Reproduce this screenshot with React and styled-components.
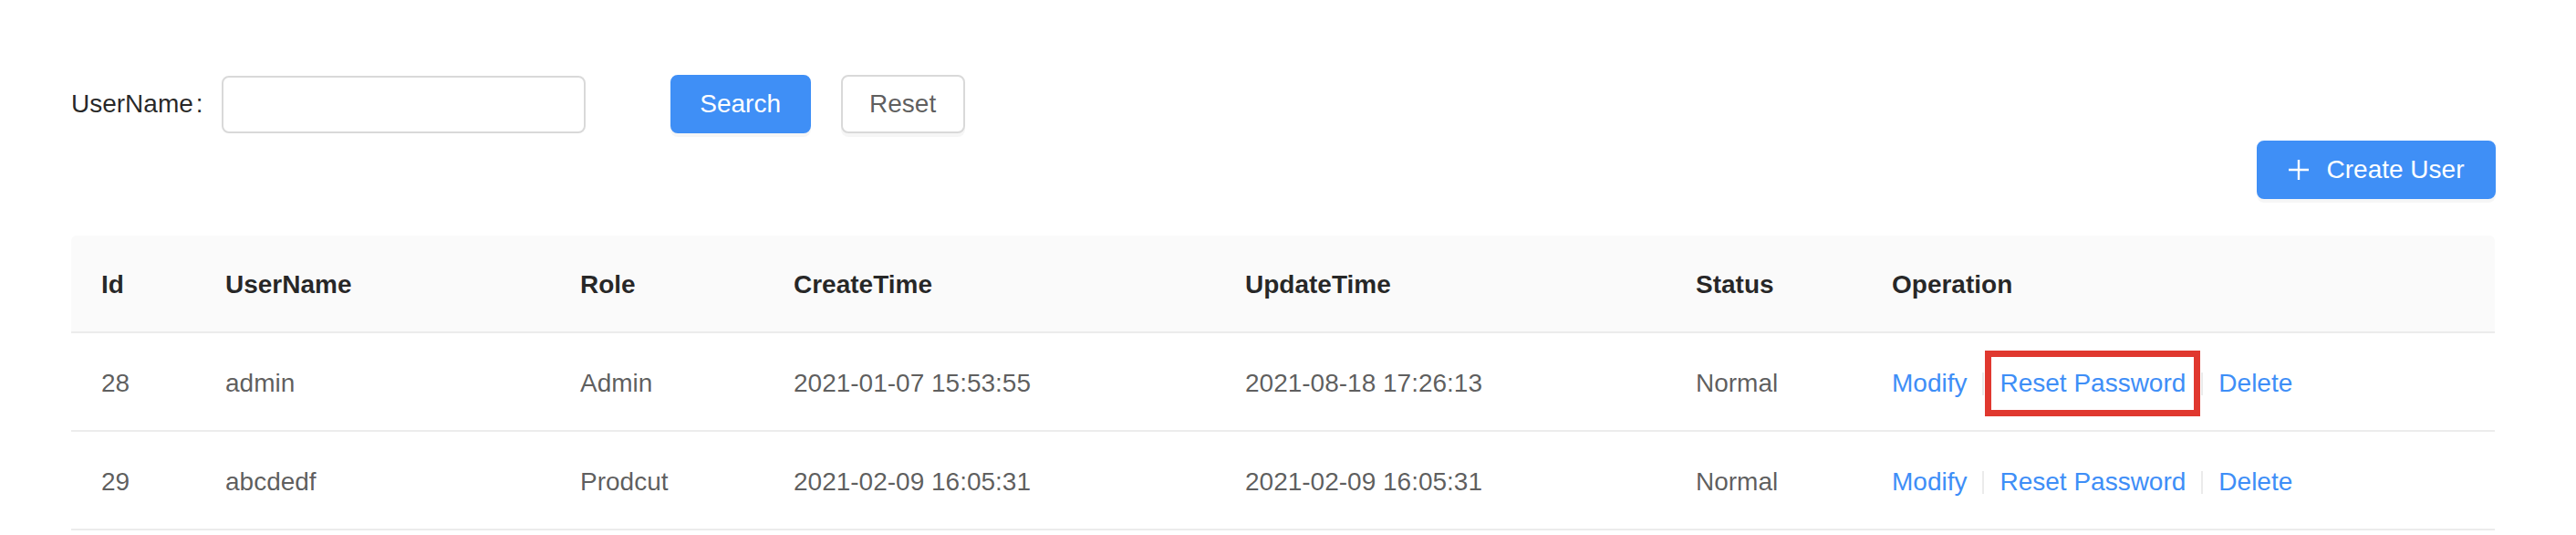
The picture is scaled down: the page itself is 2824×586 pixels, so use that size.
import React from "react"
import styled, { createGlobalStyle } from "styled-components"

const GlobalStyle = createGlobalStyle`
  html, body {
    margin: 0;
    padding: 0;
    background: #ffffff;
  }
  body {
    font-family: "Liberation Sans", Arial, sans-serif;
    font-size: 28px;
    color: rgba(0, 0, 0, 0.85);
  }
`

const Page = styled.div`
  padding: 82px 88px 0 78px;
  display: flex;
  flex-direction: column;
`

const SearchForm = styled.form`
  display: flex;
  align-items: center;
  height: 64px;
`

const Label = styled.label`
  display: flex;
  align-items: center;
  color: rgba(0, 0, 0, 0.85);
  line-height: 1;
  &::after {
    content: ":";
    margin: 0 20px 0 3px;
  }
`

const TextInput = styled.input`
  box-sizing: border-box;
  width: 399px;
  height: 63px;
  border: 2px solid #d9d9d9;
  border-radius: 8px;
  background: #fff;
  outline: none;
  font: inherit;
  padding: 0 20px;
`

const Button = styled.button`
  box-sizing: border-box;
  display: inline-flex;
  align-items: center;
  justify-content: center;
  gap: 20px;
  height: 64px;
  width: ${(props) => props.width}px;
  margin-left: ${(props) => props.offset || 0}px;
  padding: 0;
  border-radius: 8px;
  font-family: inherit;
  font-size: 28px;
  cursor: pointer;
  border: 2px solid ${(props) => (props.primary ? "#3f8ff6" : "#d9d9d9")};
  background: ${(props) => (props.primary ? "#3f8ff6" : "#ffffff")};
  color: ${(props) => (props.primary ? "#ffffff" : "rgba(0, 0, 0, 0.65)")};
  box-shadow: 0 4px 0 rgba(0, 0, 0, 0.035);
`

const Toolbar = styled.div`
  display: flex;
  justify-content: flex-end;
  margin-top: 8px;
`

const Table = styled.table`
  margin-top: 40px;
  width: 2657px;
  border-collapse: separate;
  border-spacing: 0;
  table-layout: fixed;
`

const HeadCell = styled.th`
  height: 107px;
  padding: 3px 0 0 33px;
  box-sizing: border-box;
  text-align: left;
  font-weight: 700;
  color: rgba(0, 0, 0, 0.85);
  background: #fafafa;
  border-bottom: 2px solid #ececec;
  &:first-child {
    border-top-left-radius: 6px;
  }
  &:last-child {
    border-top-right-radius: 6px;
  }
`

const Cell = styled.td`
  height: 108px;
  padding: 4px 0 0 33px;
  box-sizing: border-box;
  color: rgba(0, 0, 0, 0.65);
  border-bottom: 2px solid #ececec;
  vertical-align: middle;
  white-space: nowrap;
`

const Actions = styled.div`
  display: flex;
  align-items: center;
`

const Link = styled.a`
  display: inline-block;
  line-height: 40px;
  color: #3e8ef7;
  text-decoration: none;
  cursor: pointer;
  outline: ${(props) => (props.highlight ? "7px solid #e0382f" : "none")};
  outline-offset: 9px;
`

const Split = styled.span`
  display: inline-block;
  width: 2px;
  height: 25px;
  margin: 0 17px;
  background: #ebebeb;
`

const PlusIcon = () => (
  <svg width="22" height="22" viewBox="0 0 22 22" fill="none">
    <path d="M11 0v22M0 11h22" stroke="#ffffff" strokeWidth="2.4" />
  </svg>
)

const columns = [
  { title: "Id", width: 136 },
  { title: "UserName", width: 389 },
  { title: "Role", width: 234 },
  { title: "CreateTime", width: 495 },
  { title: "UpdateTime", width: 494 },
  { title: "Status", width: 215 },
  { title: "Operation", width: 694 },
]

const users = [
  {
    id: 28,
    name: "admin",
    role: "Admin",
    createTime: "2021-01-07 15:53:55",
    updateTime: "2021-08-18 17:26:13",
    status: "Normal",
    marked: true,
  },
  {
    id: 29,
    name: "abcdedf",
    role: "Prodcut",
    createTime: "2021-02-09 16:05:31",
    updateTime: "2021-02-09 16:05:31",
    status: "Normal",
  },
]

export default function App() {
  return (
    <>
      <GlobalStyle />
      <Page>
        <SearchForm onSubmit={(e) => e.preventDefault()}>
          <Label htmlFor="username">UserName</Label>
          <TextInput id="username" type="text" />
          <Button primary width={154} offset={93}>Search</Button>
          <Button type="button" width={136} offset={33}>Reset</Button>
        </SearchForm>

        <Toolbar>
          <Button primary width={262}>
            <PlusIcon />
            Create User
          </Button>
        </Toolbar>

        <Table>
          <colgroup>
            {columns.map((col) => (
              <col key={col.title} style={{ width: col.width }} />
            ))}
          </colgroup>
          <thead>
            <tr>
              {columns.map((col) => (
                <HeadCell key={col.title}>{col.title}</HeadCell>
              ))}
            </tr>
          </thead>
          <tbody>
            {users.map((user) => (
              <tr key={user.id}>
                <Cell>{user.id}</Cell>
                <Cell>{user.name}</Cell>
                <Cell>{user.role}</Cell>
                <Cell>{user.createTime}</Cell>
                <Cell>{user.updateTime}</Cell>
                <Cell>{user.status}</Cell>
                <Cell>
                  <Actions>
                    <Link>Modify</Link>
                    <Split />
                    <Link highlight={user.marked}>Reset Password</Link>
                    <Split />
                    <Link>Delete</Link>
                  </Actions>
                </Cell>
              </tr>
            ))}
          </tbody>
        </Table>
      </Page>
    </>
  )
}
